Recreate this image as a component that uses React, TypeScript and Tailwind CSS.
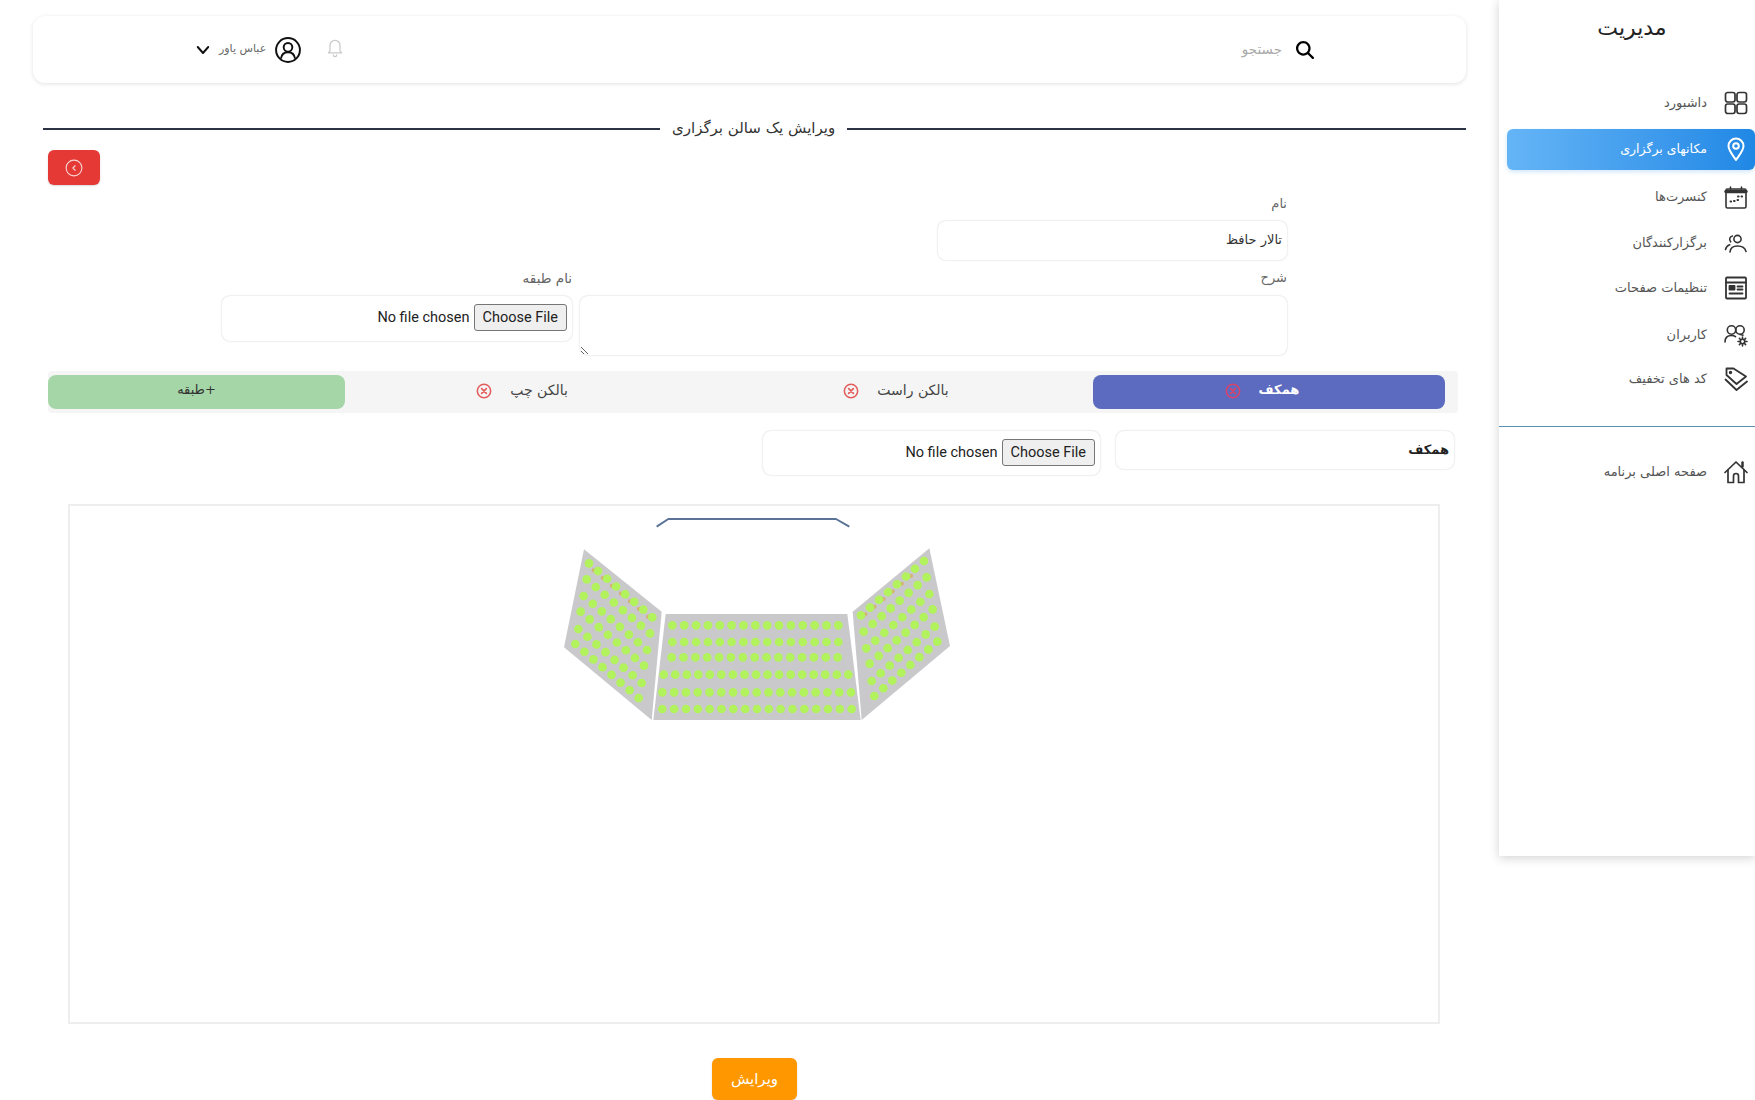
import React from "react";

const FONT = { fontFamily: '"DejaVu Sans", "Noto Sans", sans-serif' };

type IP = { className?: string };
const S = ({ children, className, w = 1.6 }: { children: React.ReactNode; className?: string; w?: number }) => (
  <svg viewBox="0 0 24 24" fill="none" stroke="currentColor" strokeWidth={w} strokeLinecap="round" strokeLinejoin="round" className={className}>
    {children}
  </svg>
);
const GridI = ({ className }: IP) => (
  <S className={className} w={1.7}>
    <rect x="1.5" y="1.5" width="9.5" height="9.5" rx="2.2" />
    <rect x="13" y="1.5" width="9.5" height="9.5" rx="2.2" />
    <rect x="1.5" y="13" width="9.5" height="9.5" rx="2.2" />
    <rect x="13" y="13" width="9.5" height="9.5" rx="2.2" />
  </S>
);
const PinI = ({ className }: IP) => (
  <S className={className} w={2}>
    <path d="M12 23c-2.500-3.800-7.500-9.500-7.500-14a7.500 7.500 0 0 1 15 0c0 4.500-5 10.200-7.500 14z" />
    <circle cx="12" cy="9" r="2.800" />
  </S>
);
const CalI = ({ className }: IP) => (
  <S className={className} w={1.6}>
    <rect x="2" y="4" width="20" height="19" rx="1.500" />
    <path d="M2 6.500h20" strokeWidth="3.400" />
    <path d="M6.500 2v2M17.500 2v2" />
    <path d="M14 11.500h.6M17.500 11.500h.6M6.500 16.500h.6M10 16h.6M13.500 15h.6" strokeWidth="2" />
  </S>
);
const UsersI = ({ className }: IP) => (
  <S className={className} w={1.6}>
    <circle cx="13.500" cy="8" r="3.600" />
    <path d="M6 21c.3-3.800 3.300-6 7.500-6s7.700 2 8.500 5.500" />
    <path d="M8.500 5a3.400 3.400 0 0 0-1.800 5.800M1.500 18.500c.6-2.500 2-4 4.200-4.800" />
  </S>
);
const NewsI = ({ className }: IP) => (
  <S className={className} w={1.8}>
    <rect x="2" y="1.500" width="20" height="21" rx="1" />
    <path d="M2 6.500h20" />
    <rect x="5.500" y="10" width="5" height="3.500" fill="currentColor" />
    <path d="M13.500 10.500h5M13.500 13.500h5M5.500 17.500h13" />
  </S>
);
const UsersGearI = ({ className }: IP) => (
  <S className={className} w={1.6}>
    <circle cx="7.500" cy="7" r="4.200" />
    <path d="M1 19c0-4 2.500-6.500 6.500-6.500 1.800 0 3 .4 4 1.200" />
    <circle cx="16" cy="7" r="4.200" />
    <path d="M16 11.500c1 0 2 .2 3 .7" />
    <circle cx="18.500" cy="18.500" r="2.200" />
    <path d="M18.500 14v1.800M18.500 21.200V23M14 18.500h1.800M21.200 18.500H23M15.400 15.400l1.300 1.300M20.300 20.300l1.300 1.300M21.600 15.400l-1.300 1.300M16.700 20.300l-1.300 1.300" />
  </S>
);
const TagI = ({ className }: IP) => (
  <S className={className} w={1.8}>
    <path d="M9.500 1.500h-7v6.500l10 9 9.500-7.500z" />
    <circle cx="6.500" cy="5.500" r="0.800" />
    <path d="M1.500 12.500l11 10.500 10.500-8.500" />
  </S>
);
const HomeI = ({ className }: IP) => (
  <S className={className} w={1.7}>
    <path d="M1 12.500L12 2l11 10.500" />
    <path d="M4 10v12.500h5.500V16a2.500 2.500 0 0 1 5 0v6.500H20V10" />
    <path d="M18.500 2.500v4" strokeWidth="2.500" />
  </S>
);
const XCircle = ({ className }: IP) => (
  <S className={className} w={2.3}>
    <circle cx="12" cy="12" r="10" />
    <path d="M8.500 8.500l7 7M15.500 8.500l-7 7" strokeWidth="2.600" />
  </S>
);

const items = [
  { t: "داشبورد", I: GridI },
  { t: "مکانهای برگزاری", I: PinI, active: true },
  { t: "کنسرت‌ها", I: CalI, nudge: "mt-[3px]" },
  { t: "برگزارکنندگان", I: UsersI, nudge: "mt-[4px]" },
  { t: "تنظیمات صفحات", I: NewsI, nudge: "mt-[2px]" },
  { t: "کاربران", I: UsersGearI, nudge: "mt-[3px]" },
  { t: "کد های تخفیف", I: TagI },
];

function Sidebar() {
  return (
    <aside className="w-[256px] h-[856px] shrink-0 bg-white shadow-[0_2px_10px_rgba(0,0,0,0.18)] flex flex-col">
      <div className="h-[80px] pt-[14px] pl-[10px] text-center text-[22px] leading-[28px] text-[#222]">مدیریت</div>
      <nav className="flex flex-col">
        {items.map(({ t, I, active, nudge }) => (
          <div key={t} className="h-[46px] flex items-center pl-2">
            <div
              className={
                active
                  ? "w-full h-[41px] flex items-center gap-[17px] pr-[7px] rounded-md text-white text-[12.500px] bg-gradient-to-l from-[#1e88e5] to-[#64b5f6] shadow-[0_2px_4px_rgba(30,136,229,0.2)]"
                  : "w-full h-[41px] flex items-center gap-[17px] pr-[7px] text-[#555] text-[13px] " + (nudge || "")
              }
            >
              <I className={active ? "w-6 h-6 text-white" : "w-6 h-6 text-[#333]"} />
              <span>{t}</span>
            </div>
          </div>
        ))}
      </nav>
      <div className="mt-6 border-t border-[#5b8db0]" />
      <div className="mt-[22px] h-[46px] flex items-center gap-[17px] pr-[7px] text-[#555] text-[13px]">
        <HomeI className="w-6 h-6 text-[#333]" />
        <span>صفحه اصلی برنامه</span>
      </div>
    </aside>
  );
}

function Header() {
  return (
    <header className="h-[67px] rounded-xl bg-white shadow-[0_1px_4px_rgba(0,0,0,0.12)] flex items-center justify-between pr-[152px] pl-[161px]">
      <div className="flex items-center gap-[14px]">
        <svg viewBox="0 0 512 512" className="w-[18px] h-[18px] text-black" fill="currentColor">
          <path d="M416 208c0 45.900-14.900 88.300-40 122.700L502.600 457.400c12.500 12.500 12.500 32.800 0 45.300s-32.800 12.500-45.300 0L330.700 376c-34.400 25.200-76.800 40-122.700 40C93.100 416 0 322.900 0 208S93.100 0 208 0S416 93.100 416 208zM208 352a144 144 0 1 0 0-288 144 144 0 1 0 0 288z" />
        </svg>
        <span className="text-[13.500px] text-[#aaa]">جستجو</span>
      </div>
      <div className="flex items-center">
        <svg viewBox="0 0 24 24" fill="none" stroke="#c9c9c9" strokeWidth="1.500" strokeLinecap="round" strokeLinejoin="round" className="w-[20px] h-[22px] ml-[24px] -mt-[5px]">
          <path d="M6 17V10a6 6 0 0 1 12 0v7l2 2H4z" />
          <path d="M10 21.500a2 2 0 0 0 4 0" />
        </svg>
        <svg viewBox="0 0 24 24" fill="none" stroke="#111" strokeWidth="1.800" className="w-[26px] h-[26px] ml-[9px]">
          <circle cx="12" cy="12" r="11" />
          <circle cx="12" cy="9.500" r="4" />
          <path d="M5.500 20c.5-4 3-6 6.500-6s6 2 6.500 6" />
        </svg>
        <span className="text-[11px] text-[#666] ml-[7px]">عباس یاور</span>
        <svg viewBox="0 0 24 24" fill="none" stroke="#111" strokeWidth="2.600" strokeLinecap="round" strokeLinejoin="round" className="w-[18px] h-[18px]">
          <path d="M5 8l7 8 7-8" />
        </svg>
      </div>
    </header>
  );
}

const fileCls =
  "w-full -mt-[2px] text-[14.500px] text-[#222] file:mr-0 file:ml-1 file:px-2 file:py-[2px] file:h-[27px] file:border file:border-[#767676] file:bg-[#efefef] file:rounded-[3px] file:text-[14.500px] file:text-[#222]";

const boxShadow = "shadow-[0_0_2px_rgba(0,0,0,0.22)]";

function FileBox({ className }: { className: string }) {
  return (
    <div className={"rounded-lg bg-white px-[5px] flex items-center " + boxShadow + " " + className} style={{ fontFamily: "Roboto, sans-serif" }}>
      <input type="file" className={fileCls} />
    </div>
  );
}

function Tab({ t, active, w }: { t: string; active?: boolean; w: string }) {
  return (
    <div
      className={
        (active ? "bg-[#5c6bc0] text-white rounded-lg font-bold text-[13px] pr-[14px] " : "text-[#444] text-[14px] pr-[20px] ") +
        w +
        " h-[34px] flex items-center justify-center gap-[18px] pb-[4px]"
      }
    >
      <span>{t}</span>
      <XCircle className={active ? "w-[16px] h-[16px] text-[#d9436b] mt-[2px]" : "w-[16px] h-[16px] text-[#e35d5d] mt-[2px]"} />
    </div>
  );
}

function line(a: [number, number], b: [number, number], n: number) {
  return Array.from({ length: n }, (_, i) => [a[0] + ((b[0] - a[0]) * i) / (n - 1), a[1] + ((b[1] - a[1]) * i) / (n - 1)]);
}

const seats: number[][] = [
  ...[[147, 190], [140, 238], [131, 288], [122, 335], [115, 387], [106, 432]].flatMap(([x, y]) =>
    line([x, y], [x + 190, y + 162], 8)
  ),
  ...[[1152, 183], [1160, 232], [1168, 282], [1178, 328], [1184, 380], [1192, 425]].flatMap(([x, y]) =>
    line([x, y], [x - 189, y + 163], 8)
  ),
  ...line([397, 376], [895, 376], 15),
  ...line([397, 426], [895, 426], 15),
  ...line([395, 472], [893, 472], 15),
  ...line([371, 524], [925, 524], 17),
  ...line([367, 577], [933, 577], 17),
  ...line([367, 627], [935, 627], 17),
];
const oranges = [
  ...line([161, 211], [324, 350], 7),
  ...line([976, 343], [1113, 228], 6),
];

function Hall() {
  return (
    <svg viewBox="0 0 1320 720" className="w-[440px] h-[240px] block">
      <path d="M350 80L385 57H888L928 80" fill="none" stroke="#5a7396" strokeWidth="6" strokeLinejoin="round" />
      <polygon points="132,148 365,335 335,660 72,442" fill="#c9c9cb" />
      <polygon points="377,342 922,342 962,660 340,660" fill="#c9c9cb" />
      <polygon points="938,335 1168,145 1230,438 965,660" fill="#c9c9cb" />
      {oranges.map(([x, y], i) => (
        <circle key={i} cx={x} cy={y} r="6" fill="#d9a84a" opacity="0.7" />
      ))}
      {seats.map(([x, y], i) => (
        <circle key={i} cx={x} cy={y} r="13" fill="#b2f25c" />
      ))}
    </svg>
  );
}

function Main() {
  return (
    <main className="w-[1499px] shrink-0 pt-4 px-[33px]">
      <Header />
      <div className="mt-[34px] ml-[10px] h-6 flex items-center gap-3">
        <div className="flex-1 h-[2px] bg-[#2c3345]" />
        <h1 className="text-[15px] text-[#333] font-normal -mt-[2px]">ویرایش یک سالن برگزاری</h1>
        <div className="w-[617px] h-[2px] bg-[#2c3345]" />
      </div>
      <div className="flex justify-end pl-[15px] mt-[9px]">
        <button className="w-[52px] h-[35px] rounded-md bg-[#e53935] flex items-center justify-center shadow-[0_1px_2px_rgba(0,0,0,0.15)]">
          <svg viewBox="0 0 24 24" fill="none" stroke="#f8d5d3" strokeWidth="1.500" strokeLinecap="round" strokeLinejoin="round" className="w-[18px] h-[18px]">
            <circle cx="12" cy="12" r="10.500" />
            <path d="M13.500 9l-3 3 3 3" />
          </svg>
        </button>
      </div>

      <div className="pr-[179px] mt-[9px]">
        <label className="block h-5 leading-5 text-[13px] text-[#666]">نام</label>
        <input
          readOnly
          value="تالار حافظ"
          className={"mt-[7px] block w-[349px] h-[39px] rounded-lg bg-white px-[5px] pb-[3px] text-[13px] text-[#333] outline-none " + boxShadow}
        />
        <div className="mt-[8px] flex gap-2 items-start">
          <div className="w-[707px]">
            <label className="block h-5 leading-5 text-[13px] text-[#666]">شرح</label>
            <textarea readOnly className={"mt-2 block w-full h-[59px] rounded-lg bg-white outline-none " + boxShadow} />
          </div>
          <div className="w-[350px]">
            <label className="block h-5 leading-5 text-[13.500px] text-[#666]">نام طبقه</label>
            <FileBox className="mt-2 h-[45px]" />
          </div>
        </div>
      </div>

      <div className="mt-[16px] mr-2 ml-[15px] h-[42px] bg-[#f5f5f5] rounded-sm flex items-center pr-[13px]">
        <Tab t="همکف" active w="w-[352px]" />
        <Tab t="بالکن راست" w="w-[374px]" />
        <Tab t="بالکن چپ" w="w-[374px]" />
        <div className="w-[297px] h-[34px] rounded-lg bg-[#a5d6a7] text-[#333] text-[13px] flex items-start justify-center pt-[5px]">+طبقه</div>
      </div>

      <div className="mt-[18px] pr-3 flex gap-4 items-start">
        <input
          readOnly
          value="همکف"
          className={"block w-[338px] h-[38px] rounded-lg bg-white px-[5px] pb-[2px] text-[13px] font-bold text-[#222] outline-none " + boxShadow}
        />
        <FileBox className="w-[337px] h-[44px]" />
      </div>

      <div dir="ltr" className="mt-[29px] mr-[26px] w-[1372px] h-[520px] border-2 border-[#eeeeee] overflow-hidden">
        <div className="ml-[470px] -mt-[6px]">
          <Hall />
        </div>
      </div>

      <div className="mt-[34px] flex justify-center pl-[10px]">
        <button className="w-[85px] h-[42px] rounded-md bg-[#ff9800] text-white text-[15px] shadow-[0_1px_2px_rgba(0,0,0,0.15)]">ویرایش</button>
      </div>
    </main>
  );
}

export default function App() {
  return (
    <div dir="rtl" style={FONT} className="w-[1755px] h-[1100px] overflow-hidden bg-white flex items-start">
      <Sidebar />
      <Main />
    </div>
  );
}
